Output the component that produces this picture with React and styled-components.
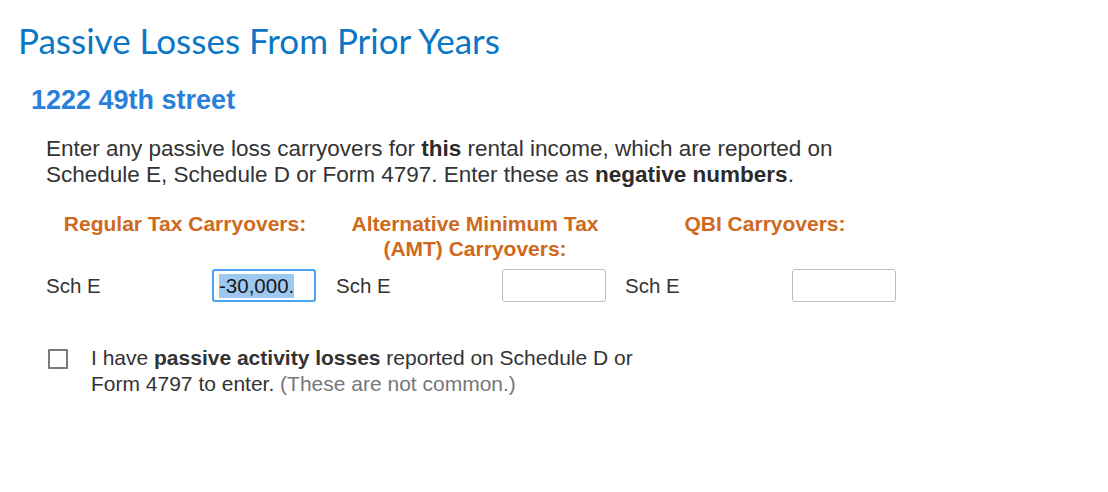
import React from "react";
import styled, { createGlobalStyle } from "styled-components";

const Global = createGlobalStyle`
  html, body { margin: 0; padding: 0; background: #fff; }
  body { font-family: "Liberation Sans", Arial, sans-serif; color: #333; }
`;

const Page = styled.div`
  padding: 19px 0 0 0;
  width: 1108px;
  height: 492px;
  box-sizing: border-box;
`;

const Title = styled.h1`
  margin: 0 0 0 18px;
  font-family: Lato, "Open Sans", sans-serif;
  font-weight: 400;
  font-size: 35px;
  line-height: 42px;
  color: #0a77c4;
`;

const Sub = styled.h2`
  margin: 24px 0 0 31px;
  font-family: "Liberation Sans", Arial, sans-serif;
  font-weight: 700;
  font-size: 27px;
  line-height: 31px;
  color: #2a80d9;
`;

const Body = styled.div`
  margin-left: 46px;
  margin-top: 20px;
`;

const Para = styled.p`
  margin: 0;
  font-family: "Liberation Sans", Arial, sans-serif;
  font-size: 22.5px;
  line-height: 26px;
  color: #333;
  b { color: #2b2b2b; }
`;

const Columns = styled.div`
  display: grid;
  grid-template-columns: repeat(3, 290px);
  margin-top: 23px;
  margin-left: -6px;
`;

const Col = styled.div`
  display: flex;
  flex-direction: column;
`;

const Head = styled.div`
  font-family: "Liberation Sans", Arial, sans-serif;
  font-weight: 700;
  font-size: 21px;
  line-height: 25px;
  color: #d0691c;
  text-align: center;
  height: 50px;
`;

const Row = styled.div`
  display: flex;
  align-items: center;
  margin-top: 8px;
  padding-left: ${(p) => p.$pad}px;
`;

const Label = styled.span`
  width: ${(p) => p.$w}px;
  font-family: "Liberation Sans", Arial, sans-serif;
  font-size: 20.5px;
  color: #333;
`;

const Field = styled.div`
  width: 104px;
  height: 33px;
  box-sizing: border-box;
  border: ${(p) => (p.$focus ? "2px solid #4aa3f0" : "1px solid #bdbdbd")};
  border-radius: 3px;
  background: #fff;
  display: flex;
  align-items: center;
  padding-left: ${(p) => (p.$focus ? "5px" : "6px")};
  font-family: "Liberation Sans", Arial, sans-serif;
  font-size: 20.5px;
  color: #1a1a1a;
`;

const Sel = styled.span`
  background: #9dc8f0;
  line-height: 24px;
`;

const Check = styled.div`
  display: flex;
  align-items: flex-start;
  margin-top: 43px;
  margin-left: 2px;
`;

const Box = styled.div`
  width: 20px;
  height: 20px;
  box-sizing: border-box;
  border: 2px solid #7a7a7a;
  border-radius: 1px;
  margin-top: 4px;
  flex-shrink: 0;
`;

const CheckText = styled.div`
  margin-left: 23px;
  font-family: "Liberation Sans", Arial, sans-serif;
  font-size: 21px;
  line-height: 26px;
  color: #333;
  width: 600px;
`;

const Muted = styled.span`
  color: #777;
`;

const cols = [
  { head: <>Regular Tax Carryovers:</>, value: "-30,000.", pad: 6, w: 166 },
  { head: <>Alternative Minimum Tax<br />(AMT) Carryovers:</>, pad: 6, w: 166 },
  { head: <>QBI Carryovers:</>, pad: 5, w: 167 },
];

export default function App() {
  return (
    <Page>
      <Global />
      <Title>Passive Losses From Prior Years</Title>
      <Sub>1222 49th street</Sub>
      <Body>
        <Para>
          Enter any passive loss carryovers for <b>this</b> rental income, which are reported on
          <br />
          Schedule E, Schedule D or Form 4797. Enter these as <b>negative numbers</b>.
        </Para>
        <Columns>
          {cols.map((c, i) => (
            <Col key={i}>
              <Head>{c.head}</Head>
              <Row $pad={c.pad}>
                <Label $w={c.w}>Sch E</Label>
                <Field $focus={!!c.value}>{c.value ? <Sel>{c.value}</Sel> : null}</Field>
              </Row>
            </Col>
          ))}
        </Columns>
        <Check>
          <Box />
          <CheckText>
            I have <b>passive activity losses</b> reported on Schedule D or
            <br />
            Form 4797 to enter. <Muted>(These are not common.)</Muted>
          </CheckText>
        </Check>
      </Body>
    </Page>
  );
}
